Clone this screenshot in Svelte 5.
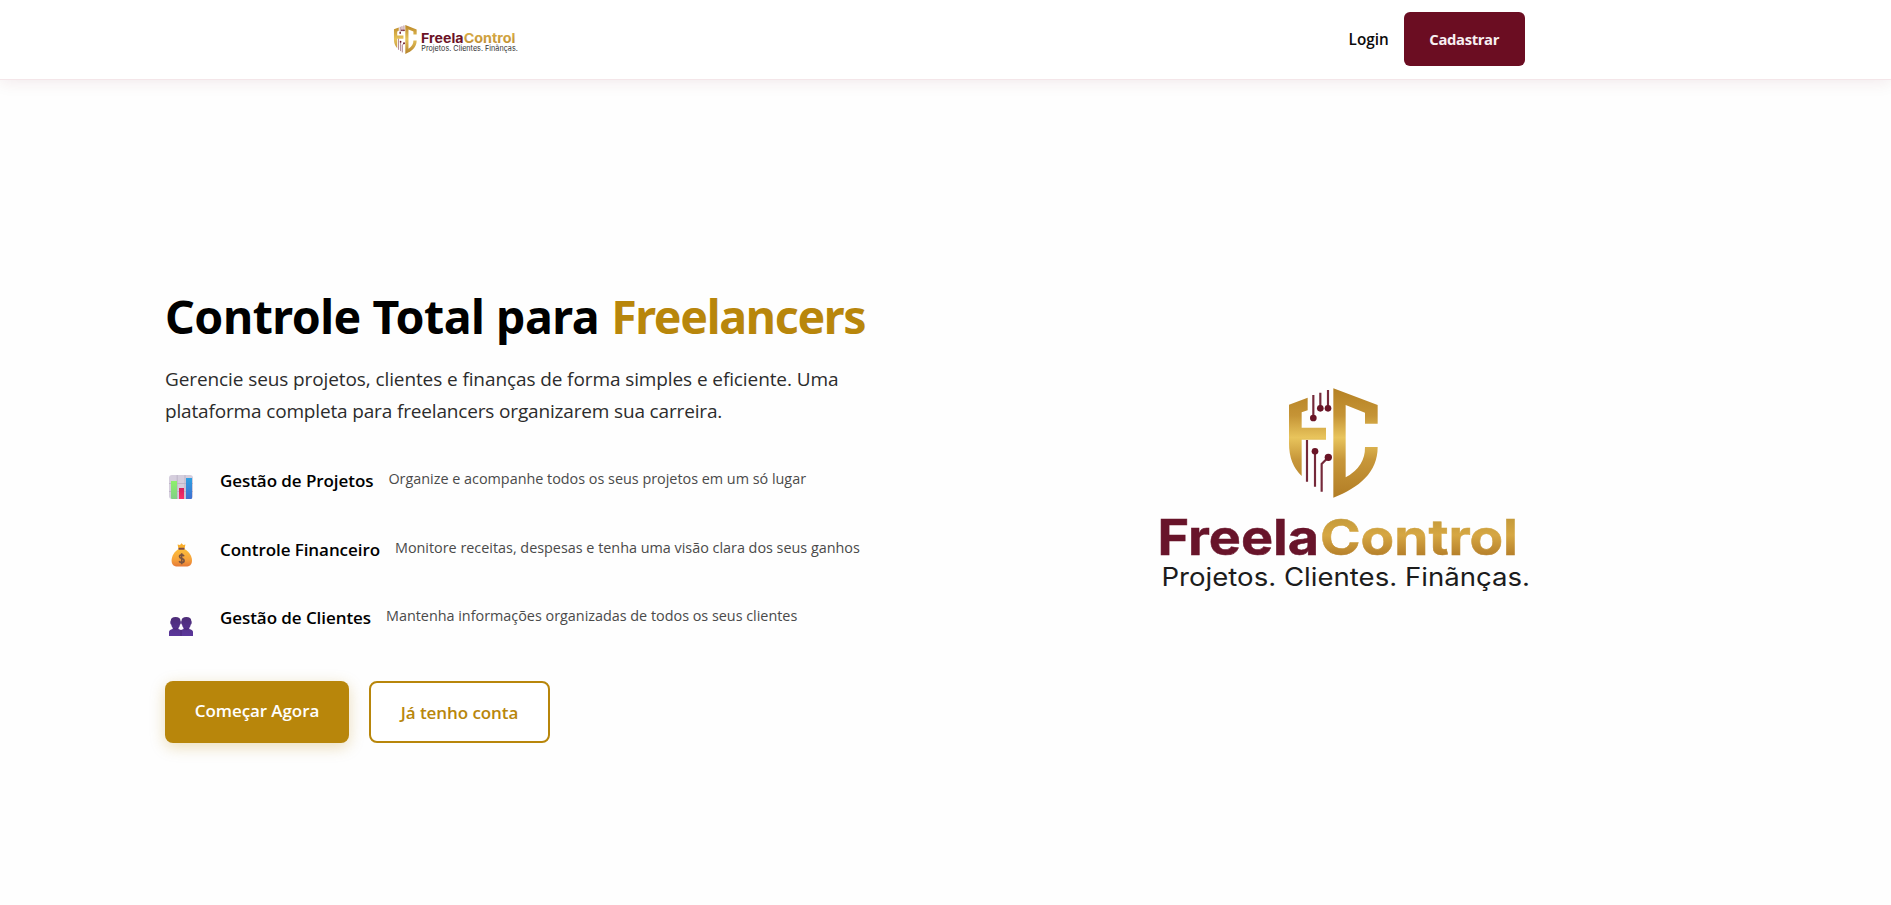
<script>
  const features = [
    { icon: 'chart', title: 'Gestão de Projetos', text: 'Organize e acompanhe todos os seus projetos em um só lugar' },
    { icon: 'money', title: 'Controle Financeiro', text: 'Monitore receitas, despesas e tenha uma visão clara dos seus ganhos' },
    { icon: 'people', title: 'Gestão de Clientes', text: 'Mantenha informações organizadas de todos os seus clientes' }
  ];
</script>

{#snippet shield(gold)}
  <g fill="url(#{gold})">
    <path d="M57 89 113 68V106L95 112V158H168V194H95V303Q57 268 57 205Z" />
    <path d="M190 40 323 90V146H285V113L227 90V307Q286 275 285 216H323C323 292 268 338 190 368Z" />
  </g>
  <g stroke="#75293a" stroke-width="6.5" fill="none">
    <path d="M130 60V128M151 53V100M174 45V100M111 195V320M135 229V335M175 247 155 267V350" />
  </g>
  <g fill="#691426">
    <circle cx="130" cy="129" r="10" /><circle cx="151" cy="100" r="10" /><circle cx="174" cy="100" r="10" />
    <circle cx="135" cy="229" r="10" /><circle cx="175" cy="247" r="11" />
  </g>
{/snippet}

<header>
  <nav>
    <svg class="brand" viewBox="380 10 150 60" width="150" height="60" role="img" aria-label="FreelaControl">
      <defs>
        <linearGradient id="gs" x1="0" y1="40" x2="0" y2="368" gradientUnits="userSpaceOnUse">
          <stop offset="0" stop-color="#b98526" /><stop offset=".48" stop-color="#e6c35a" /><stop offset="1" stop-color="#b5822a" />
        </linearGradient>
        <linearGradient id="ts" x1="0" y1="0" x2="0" y2="1">
          <stop offset="0.2" stop-color="#d9ae49" /><stop offset=".8" stop-color="#c39234" />
        </linearGradient>
      </defs>
      <g transform="translate(389.1 21.5) scale(.0853 .0884)">{@render shield('gs')}</g>
      <g font-family="Inter, sans-serif">
        <text x="421" y="42.6" font-size="13.4" font-weight="700" fill="#6b1226" textLength="42.5" lengthAdjust="spacingAndGlyphs">Freela</text>
        <text x="463.7" y="42.6" font-size="13.4" font-weight="700" fill="url(#ts)" textLength="51.8" lengthAdjust="spacingAndGlyphs">Control</text>
        <text x="421.3" y="51" font-size="7.6" font-weight="400" fill="#333" textLength="96.5" lengthAdjust="spacingAndGlyphs">Projetos. Clientes. Finãnças.</text>
      </g>
    </svg>
    <div class="links">
      <a class="login" href="#login">Login</a>
      <a class="signup" href="#cadastro">Cadastrar</a>
    </div>
  </nav>
</header>

<main>
  <section class="copy">
    <h1><span class="lead">Controle Total para</span>{' '}<span class="accent">Freelancers</span></h1>
    <p class="intro">Gerencie seus projetos, clientes e finanças de forma simples e eficiente. Uma<br /><span class="second">plataforma completa para freelancers organizarem sua carreira.</span></p>

    <div class="features">
      {#each features as f}
        <div class="feature">
          <span class="icon">
            {#if f.icon === 'chart'}
              <svg viewBox="0 0 24 24" width="24" height="24">
                <defs>
                  <linearGradient id="cg" x1="0" y1="0" x2="0" y2="1"><stop stop-color="#8df06c" /><stop offset="1" stop-color="#82cf86" /></linearGradient>
                  <linearGradient id="cr" x1="0" y1="0" x2="0" y2="1"><stop stop-color="#d61f5c" /><stop offset="1" stop-color="#f92f67" /></linearGradient>
                  <linearGradient id="cb" x1="0" y1="0" x2="0" y2="1"><stop stop-color="#2da0e2" /><stop offset="1" stop-color="#3f6fd0" /></linearGradient>
                </defs>
                <rect width="24" height="24" rx="3" fill="#d5cedd" />
                <path d="M8.2 0V24M16 0V24M0 8.5H24M0 16.5H24" stroke="#b9b0c4" stroke-width=".8" />
                <path d="M2 6H8V24H3Q2 24 2 23Z" fill="url(#cg)" />
                <path d="M10 13H15V24H10Z" fill="url(#cr)" />
                <path d="M17 3H23V23Q23 24 22 24H17Z" fill="url(#cb)" />
              </svg>
            {:else if f.icon === 'money'}
              <svg viewBox="0 0 24 24" width="24" height="24">
                <defs>
                  <linearGradient id="mb" x1="0" y1="0" x2="0" y2="1"><stop stop-color="#fdbf3a" /><stop offset=".6" stop-color="#f6a23b" /><stop offset="1" stop-color="#e57937" /></linearGradient>
                </defs>
                <path d="M9.3 5.2 8.6 1.6 11 2 12.6.3 14.2 2 16.4 1.6 15.7 5.2Z" fill="#f9ae2b" />
                <path d="M9.6 6H15.5C20 8.5 23 13 23 17.5 23 21.8 20.5 23.6 17 23.6H8.5C5 23.6 2.6 21.8 2.6 17.5 2.6 13 5.5 8.5 9.6 6Z" fill="url(#mb)" />
                <rect x="9.3" y="4.8" width="6.4" height="2" rx="1" fill="#7b4b45" />
                <path d="M15 13.2Q14.5 11.9 12.7 11.9 10.5 11.9 10.5 13.6 10.5 15 12.7 15.5 15.1 16 15.1 17.7 15.1 19.5 12.7 19.5 10.8 19.5 10.2 18.1M12.7 10.2V21.3" fill="none" stroke="#785340" stroke-width="1.6" />
              </svg>
            {:else}
              <svg viewBox="0 0 24 24" width="24" height="24">
                <defs>
                  <linearGradient id="pp" x1="0" y1="5" x2="0" y2="24" gradientUnits="userSpaceOnUse"><stop stop-color="#4c2c77" /><stop offset="1" stop-color="#5b379c" /></linearGradient>
                </defs>
                <g fill="url(#pp)">
                  <path d="M1.8 8.5Q1.800 5 6.600 5T11.400 8.500Q12 9 11.900 11Q11.600 12.600 11 12.600Q10.700 14.800 9.500 16V17L12 18V24H0V20Q0 18 3.700 17V16Q2.500 14.800 2.200 12.600Q1.600 12.600 1.300 11Q1.200 9 1.800 8.500Z" />
                  <path d="M22.200 8.500Q22.200 5 17.400 5T12.600 8.500Q12 9 12.100 11Q12.400 12.600 13 12.600Q13.300 14.800 14.500 16V17L12 18V24H24V20Q24 18 20.300 17V16Q21.500 14.800 21.800 12.600Q22.400 12.600 22.700 11Q22.800 9 22.200 8.500Z" />
                </g>
                <path d="M4.400 16.600Q6.600 17.900 8.800 16.600M15.200 16.600Q17.400 17.900 19.600 16.600M12 18V24" fill="none" stroke="#44246f" stroke-width=".8" />
              </svg>
            {/if}
          </span>
          <h3>{f.title}</h3>
          <p>{f.text}</p>
        </div>
      {/each}
    </div>

    <div class="actions">
      <a class="btn primary" href="#comecar">Começar Agora</a>
      <a class="btn outline" href="#entrar">Já tenho conta</a>
    </div>
  </section>

  <section class="visual">
    <svg viewBox="1149 375 390 225" width="390" height="225" role="img" aria-label="FreelaControl">
      <defs>
        <linearGradient id="gl" x1="0" y1="40" x2="0" y2="368" gradientUnits="userSpaceOnUse">
          <stop offset="0" stop-color="#b58123" /><stop offset=".25" stop-color="#c59436" /><stop offset=".45" stop-color="#e8c45c" /><stop offset=".65" stop-color="#c7973a" /><stop offset="1" stop-color="#b27d25" />
        </linearGradient>
        <linearGradient id="tl" x1="0" y1="518" x2="0" y2="556" gradientUnits="userSpaceOnUse">
          <stop offset="0" stop-color="#c49a3a" /><stop offset=".45" stop-color="#d6a743" /><stop offset="1" stop-color="#b57f2a" />
        </linearGradient>
      </defs>
      <g transform="translate(1270 375) scale(.33333)">{@render shield('gl')}</g>
      <g font-family="Inter, sans-serif">
        <text x="1157.5" y="554.7" font-size="49" font-weight="700" fill="#68142a" stroke="#68142a" stroke-width=".5" textLength="161.5" lengthAdjust="spacingAndGlyphs">Freela</text>
        <text x="1320" y="554.7" font-size="49" font-weight="700" fill="url(#tl)" stroke="url(#tl)" stroke-width=".5" textLength="198" lengthAdjust="spacingAndGlyphs">Control</text>
        <text x="1161.5" y="586.2" font-size="25" font-weight="400" fill="#1c1c1c" textLength="368.5" lengthAdjust="spacingAndGlyphs">Projetos. Clientes. Finãnças.</text>
      </g>
    </svg>
  </section>
</main>

<style>
  :global(body) {
    background: #fefefe;
    font-family: 'Open Sans', 'Noto Sans', sans-serif;
    color: #000;
    overflow: hidden;
  }
  a { text-decoration: none; }
  svg { display: block; }
  h1, h3, p { margin: 0; }

  header {
    height: 79px;
    background: #fff;
    border-bottom: 1px solid #f4e6e9;
    box-shadow: 0 2px 16px rgba(107, 13, 34, 0.09);
  }
  nav {
    box-sizing: border-box;
    width: 1160px;
    height: 78px;
    margin: 0 auto;
    display: flex;
    align-items: center;
    justify-content: space-between;
  }
  .brand { margin: 1px 0 0 14.5px; }
  .links { display: flex; align-items: center; gap: 15px; margin-right: 0.8px; }
  .login { color: #0b0b0b; font-size: 15.3px; font-weight: 600; }
  .signup {
    box-sizing: border-box;
    width: 121px;
    height: 54px;
    line-height: 54px;
    text-align: center;
    border-radius: 6px;
    background: #6b0d22;
    color: #f7eff1;
    font-size: 14.8px;
    font-weight: 700;
    letter-spacing: -0.35px;
  }

  main {
    display: grid;
    grid-template-columns: 797px 764px;
    padding-left: 165px;
    height: 825px;
  }
  .copy { padding-top: 206.5px; }
  h1 {
    font-family: 'Noto Sans', sans-serif;
    font-size: 46.5px;
    line-height: 58px;
    font-weight: 700;
    white-space: pre;
  }
  .lead { letter-spacing: -0.5px; }
  .accent { color: #b8860b; letter-spacing: -1.32px; }
  .intro {
    margin-top: 18.5px;
    font-size: 19px;
    line-height: 32px;
    letter-spacing: -0.1px;
    color: #2c2c2c;
  }
  .second { letter-spacing: -0.16px; }
  .features { margin-top: 40.4px; }
  .feature {
    display: flex;
    align-items: flex-start;
    height: 68.4px;
    white-space: nowrap;
  }
  .icon {
    box-sizing: border-box;
    width: 55px;
    flex: none;
    padding: 7.5px 0 0 4px;
  }
  h3 { font-size: 17px; line-height: 28px; font-weight: 600; letter-spacing: -0.07px; }
  .feature p {
    margin-left: 15px;
    font-size: 14.4px;
    line-height: 24px;
    letter-spacing: -0.01px;
    color: #4a4a4a;
  }
  .actions { display: flex; gap: 20px; margin-top: 8.4px; }
  .btn {
    box-sizing: border-box;
    height: 62px;
    border-radius: 8px;
    font-size: 17px;
    font-weight: 600;
    text-align: center;
    letter-spacing: -0.08px;
  }
  .primary {
    width: 184px;
    line-height: 59px;
    background: #b8860b;
    color: #fff;
    box-shadow: 0 4px 15px rgba(184, 134, 11, 0.28);
  }
  .outline {
    width: 181px;
    line-height: 59px;
    border: 2px solid #b8860b;
    color: #b8860b;
    background: #fff;
  }
  .visual {
    display: flex;
    justify-content: center;
    align-items: flex-start;
    padding-top: 295px;
  }
</style>
